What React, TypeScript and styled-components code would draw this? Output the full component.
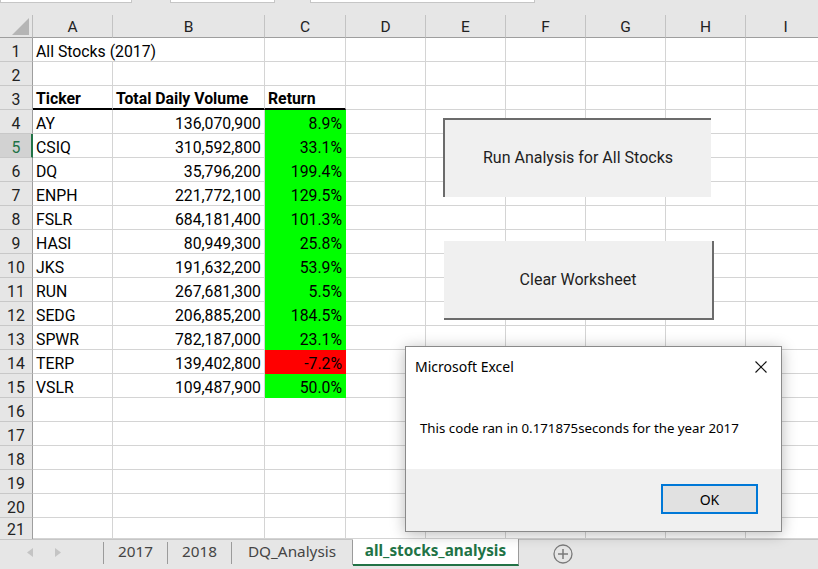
import React from "react";
import styled, { createGlobalStyle } from "styled-components";

const GlobalStyle = createGlobalStyle`
  html, body { margin: 0; padding: 0; background: #ffffff; }
  body { width: 818px; height: 569px; overflow: hidden; font-family: "Roboto", "Liberation Sans", sans-serif; }
  * { box-sizing: border-box; }
`;

const GREEN = "#217346";
const CELL_FONT = `"Roboto", "Liberation Sans", sans-serif`;
const UI_FONT = `"Noto Sans", "Open Sans", "Liberation Sans", sans-serif`;

const Page = styled.div`
  position: relative;
  width: 818px;
  height: 569px;
  display: flex;
  flex-direction: column;
  overflow: hidden;
  background: #ffffff;
`;

const TopStrip = styled.div`
  flex: none;
  height: 15px;
  background: #e6e6e6;
  display: flex;
  align-items: flex-start;
`;

const StripBox = styled.div<{ $w: number; $gap: number }>`
  width: ${(p) => p.$w}px;
  margin-left: ${(p) => p.$gap}px;
  height: 3px;
  background: #ffffff;
  border: 1px solid #c6c6c6;
  border-top: none;
`;

const Grid = styled.div`
  flex: 1;
  min-height: 0;
  display: grid;
  grid-template-columns: 33px 80px 152px 81px repeat(6, 80px);
  grid-template-rows: 23px repeat(20, 24px) 21px;
  overflow: hidden;
  font-family: ${CELL_FONT};
  font-size: 15.8px;
  color: #000;
`;

const Corner = styled.div`
  background: #e6e6e6;
  border-right: 1px solid #bdbdbd;
  border-bottom: 1px solid #9e9e9e;
  display: flex;
  align-items: flex-end;
  justify-content: flex-end;
  padding: 0 3px 2px 0;
`;

const ColHeader = styled.div`
  background: #e6e6e6;
  border-right: 1px solid #c3c3c3;
  border-bottom: 1px solid #9e9e9e;
  display: flex;
  align-items: center;
  justify-content: center;
  font-size: 15.5px;
  color: #222;
  padding-top: 1px;
`;

const RowHeader = styled.div<{ $selected?: boolean; $last?: boolean }>`
  background: ${(p) => (p.$selected ? "#d2d2d2" : "#e6e6e6")};
  color: ${(p) => (p.$selected ? GREEN : "#222")};
  border-right: ${(p) => (p.$selected ? `2px solid ${GREEN}` : "1px solid #9e9e9e")};
  border-bottom: ${(p) => (p.$last ? "none" : "1px solid #c8c8c8")};
  display: flex;
  align-items: ${(p) => (p.$last ? "flex-start" : "flex-end")};
  justify-content: center;
  padding-top: ${(p) => (p.$last ? 3 : 0)}px;
  padding-left: ${(p) => (p.$selected ? 1 : 0)}px;
  font-size: 15.8px;
  line-height: 18px;
`;

const Cell = styled.div<{
  $right?: boolean;
  $bold?: boolean;
  $fill?: string;
  $underline?: boolean;
  $span?: number;
}>`
  grid-column: span ${(p) => p.$span || 1};
  background: ${(p) => p.$fill || "#ffffff"};
  border-right: 1px solid ${(p) => p.$fill || "#d4d4d4"};
  border-bottom: ${(p) => (p.$underline ? "2px solid #000" : `1px solid ${p.$fill || "#d4d4d4"}`)};
  display: flex;
  align-items: flex-end;
  justify-content: ${(p) => (p.$right ? "flex-end" : "flex-start")};
  padding: 0 3px 0 3px;
  font-weight: ${(p) => (p.$bold ? 700 : 400)};
  line-height: ${(p) => (p.$underline ? 18 : 19)}px;
  white-space: nowrap;
`;

const ShapeButton = styled.div<{ $x: number; $y: number; $w: number; $h: number; $pressed?: boolean }>`
  position: absolute;
  left: ${(p) => p.$x}px;
  top: ${(p) => p.$y}px;
  width: ${(p) => p.$w}px;
  height: ${(p) => p.$h}px;
  background: #f0f0f0;
  border-style: solid;
  border-color: #6b6b6b;
  border-width: ${(p) => (p.$pressed ? "2px 0 0 2px" : "0 2px 2px 0")};
  display: flex;
  align-items: center;
  justify-content: center;
  padding-bottom: ${(p) => (p.$pressed ? 2 : 0)}px;
  font-family: ${CELL_FONT};
  font-size: 16px;
  color: #1e1e1e;
`;

const Dialog = styled.div`
  position: absolute;
  left: 405px;
  top: 346px;
  width: 377px;
  height: 186px;
  border: 1px solid #8a8a8a;
  background: #ffffff;
  box-shadow: 0 2px 14px rgba(0, 0, 0, 0.28);
  display: flex;
  flex-direction: column;
  font-family: ${UI_FONT};
  color: #000;
`;

const DialogTitle = styled.div`
  height: 39px;
  display: flex;
  align-items: center;
  justify-content: space-between;
  padding: 0 14px 0 9px;
  font-size: 14px;
`;

const CloseBox = styled.div`
  width: 12px;
  height: 12px;
  display: flex;
`;

const DialogMessage = styled.div`
  flex: 1;
  display: flex;
  align-items: center;
  padding: 0 0 0 14px;
  font-size: 13.25px;
`;

const DialogFooter = styled.div`
  height: 62px;
  background: #f0f0f0;
  display: flex;
  justify-content: flex-end;
  align-items: flex-start;
  padding: 15px 23px 0 0;
`;

const OkButton = styled.div`
  width: 97px;
  height: 30px;
  border: 2px solid #0078d7;
  background: #e1e1e1;
  display: flex;
  align-items: center;
  justify-content: center;
  font-size: 14px;
`;

const TabBar = styled.div`
  flex: none;
  height: 30px;
  background: #e6e6e6;
  border-top: 1px solid #c6c6c6;
  display: flex;
  align-items: flex-start;
  font-family: ${UI_FONT};
`;

const NavArea = styled.div`
  width: 103px;
  height: 25px;
  display: flex;
  align-items: center;
  padding-left: 27px;
  gap: 22px;
`;

const Separator = styled.div`
  width: 1px;
  height: 22px;
  margin-top: 2px;
  background: #9b9b9b;
`;

const Tab = styled.div<{ $w: number }>`
  width: ${(p) => p.$w}px;
  height: 22px;
  display: flex;
  align-items: center;
  justify-content: center;
  font-size: 15.3px;
  color: #444;
`;

const FramedTab = styled(Tab)`
  height: 25px;
  padding-bottom: 3px;
  border-right: 1px solid #9b9b9b;
`;

const ActiveTab = styled.div<{ $w: number }>`
  width: ${(p) => p.$w}px;
  height: 27px;
  margin-top: -1px;
  background: #ffffff;
  border-right: 1px solid #9b9b9b;
  border-bottom: 2px solid ${GREEN};
  display: flex;
  align-items: center;
  justify-content: center;
  padding-bottom: 3px;
  font-size: 15.3px;
  font-weight: 700;
  color: ${GREEN};
`;

const AddSheet = styled.div`
  margin-left: 34px;
  height: 27px;
  display: flex;
  align-items: center;
`;

type Row = { a: string; b: string; c: string; fill?: string };

const stocks: Row[] = [
  { a: "AY", b: "136,070,900", c: "8.9%" },
  { a: "CSIQ", b: "310,592,800", c: "33.1%" },
  { a: "DQ", b: "35,796,200", c: "199.4%" },
  { a: "ENPH", b: "221,772,100", c: "129.5%" },
  { a: "FSLR", b: "684,181,400", c: "101.3%" },
  { a: "HASI", b: "80,949,300", c: "25.8%" },
  { a: "JKS", b: "191,632,200", c: "53.9%" },
  { a: "RUN", b: "267,681,300", c: "5.5%" },
  { a: "SEDG", b: "206,885,200", c: "184.5%" },
  { a: "SPWR", b: "782,187,000", c: "23.1%" },
  { a: "TERP", b: "139,402,800", c: "-7.2%", fill: "#ff0000" },
  { a: "VSLR", b: "109,487,900", c: "50.0%" },
];

const COLS = ["A", "B", "C", "D", "E", "F", "G", "H", "I"];
const EXTRA = 6; // D..I

function Empties({ n }: { n: number }) {
  return (
    <>
      {Array.from({ length: n }).map((_, i) => (
        <Cell key={i} />
      ))}
    </>
  );
}

function CornerTriangle() {
  return (
    <svg width="17" height="17" viewBox="0 0 17 17">
      <polygon points="17,0 17,17 0,17" fill="#b5b5b5" />
    </svg>
  );
}

export default function App() {
  const rows: React.ReactNode[] = [];
  rows.push(
    <React.Fragment key="r1">
      <RowHeader>1</RowHeader>
      <Cell $span={2}>All Stocks (2017)</Cell>
      <Cell />
      <Empties n={EXTRA} />
    </React.Fragment>
  );
  rows.push(
    <React.Fragment key="r2">
      <RowHeader>2</RowHeader>
      <Empties n={3 + EXTRA} />
    </React.Fragment>
  );
  rows.push(
    <React.Fragment key="r3">
      <RowHeader>3</RowHeader>
      <Cell $bold $underline>Ticker</Cell>
      <Cell $bold $underline>Total Daily Volume</Cell>
      <Cell $bold $underline>Return</Cell>
      <Empties n={EXTRA} />
    </React.Fragment>
  );
  stocks.forEach((s, i) => {
    const n = i + 4;
    rows.push(
      <React.Fragment key={`r${n}`}>
        <RowHeader $selected={n === 5}>{n}</RowHeader>
        <Cell>{s.a}</Cell>
        <Cell $right>{s.b}</Cell>
        <Cell $right $fill={s.fill || "#00ff00"}>{s.c}</Cell>
        <Empties n={EXTRA} />
      </React.Fragment>
    );
  });
  for (let n = 16; n <= 21; n++) {
    rows.push(
      <React.Fragment key={`r${n}`}>
        <RowHeader $last={n === 21}>{n}</RowHeader>
        <Empties n={3 + EXTRA} />
      </React.Fragment>
    );
  }

  return (
    <Page>
      <GlobalStyle />
      <TopStrip>
        <StripBox $w={132} $gap={0} />
        <StripBox $w={105} $gap={38} />
        <StripBox $w={225} $gap={35} />
      </TopStrip>
      <Grid>
        <Corner>
          <CornerTriangle />
        </Corner>
        {COLS.map((c) => (
          <ColHeader key={c}>{c}</ColHeader>
        ))}
        {rows}
      </Grid>
      <TabBar>
        <NavArea>
          <svg width="6" height="9" viewBox="0 0 6 9">
            <polygon points="6,0 6,9 0,4.5" fill="#c4c4c4" />
          </svg>
          <svg width="6" height="9" viewBox="0 0 6 9">
            <polygon points="0,0 0,9 6,4.5" fill="#c4c4c4" />
          </svg>
        </NavArea>
        <Separator />
        <Tab $w={63}>2017</Tab>
        <Separator />
        <Tab $w={63}>2018</Tab>
        <Separator />
        <FramedTab $w={121}>DQ_Analysis</FramedTab>
        <ActiveTab $w={166}>all_stocks_analysis</ActiveTab>
        <AddSheet>
          <svg width="20" height="20" viewBox="0 0 20 20">
            <circle cx="10" cy="10" r="9" fill="none" stroke="#7a7a7a" strokeWidth="1.3" />
            <line x1="5" y1="10" x2="15" y2="10" stroke="#7a7a7a" strokeWidth="1.5" />
            <line x1="10" y1="5" x2="10" y2="15" stroke="#7a7a7a" strokeWidth="1.5" />
          </svg>
        </AddSheet>
      </TabBar>

      <ShapeButton $x={443} $y={118} $w={268} $h={79} $pressed>
        Run Analysis for All Stocks
      </ShapeButton>
      <ShapeButton $x={444} $y={241} $w={270} $h={79}>
        Clear Worksheet
      </ShapeButton>

      <Dialog>
        <DialogTitle>
          <span>Microsoft Excel</span>
          <CloseBox>
            <svg width="12" height="12" viewBox="0 0 12 12">
              <line x1="0.5" y1="0.5" x2="11.5" y2="11.5" stroke="#111" strokeWidth="1.1" />
              <line x1="11.5" y1="0.5" x2="0.5" y2="11.5" stroke="#111" strokeWidth="1.1" />
            </svg>
          </CloseBox>
        </DialogTitle>
        <DialogMessage>This code ran in 0.171875seconds for the year 2017</DialogMessage>
        <DialogFooter>
          <OkButton>OK</OkButton>
        </DialogFooter>
      </Dialog>
    </Page>
  );
}
